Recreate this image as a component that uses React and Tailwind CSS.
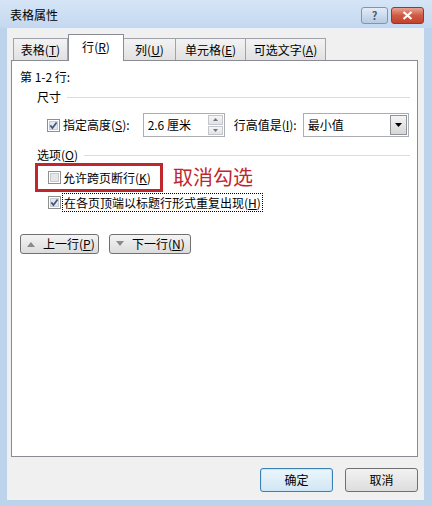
import React from "react";

function Check({ checked }) {
  return (
    <svg width="13" height="13" viewBox="0 0 13 13" className="shrink-0">
      <rect x="0.5" y="0.5" width="12" height="12" fill="#fff" stroke="#8e8f8f" />
      <rect x="2.5" y="2.5" width="8" height="8" fill="#e4e6ea" stroke="#c9cbcf" />
      {checked && (
        <path d="M3.3 6.4 L5.4 9 L9.6 3.4" fill="none" stroke="#3f5689" strokeWidth="1.7" />
      )}
    </svg>
  );
}

function Tab({ label, u, rest, w, active }) {
  if (active) {
    return (
      <div
        className={`${w} h-[27px] relative z-10 bg-white border border-b-0 border-[#898c95] flex items-start justify-center pt-[4px]`}
      >
        <span>
          {label}(<u>{u}</u>){rest}
        </span>
      </div>
    );
  }
  return (
    <div
      className={`${w} h-[22px] mb-[1px] bg-gradient-to-b from-[#f3f3f3] to-[#e1e1e1] border border-b-0 border-[#a0a3ab] flex items-center justify-center -ml-[1px]`}
    >
      <span>
        {label}(<u>{u}</u>){rest}
      </span>
    </div>
  );
}

function GrayButton({ up, label, u, w }) {
  return (
    <div
      className={`${w} h-[20px] rounded-[3px] border border-[#707070] bg-gradient-to-b from-[#f4f4f4] to-[#dcdcdc] flex items-center pl-[6px] gap-[8px]`}
    >
      <svg width="8" height="6" viewBox="0 0 8 6">
        {up ? <path d="M0 6 L4 1 L8 6 Z" fill="#8a8a8a" /> : <path d="M0 0 L8 0 L4 5 Z" fill="#8a8a8a" />}
      </svg>
      <span>
        {label}(<u>{u}</u>)
      </span>
    </div>
  );
}

export default function App() {
  return (
    <div className="w-[432px] h-[506px] bg-[#bcd3ec] flex flex-col text-[12px] leading-[16px] text-black font-['Noto_Sans_CJK_SC','Noto_Sans',sans-serif]">
      {/* title bar */}
      <div className="h-[28px] shrink-0 bg-gradient-to-b from-[#d6e5f6] to-[#c4d8ef] flex items-center justify-between pl-[10px] pr-[8px]">
        <span className="text-[12px] mt-[1px]">表格属性</span>
        <div className="flex gap-[3px] mt-[3px]">
          <div className="w-[27px] h-[17px] rounded-[3px] border border-[#7d96b8] bg-gradient-to-b from-[#e3ecf6] to-[#b7cbe2] flex items-center justify-center text-[11px] leading-none text-[#4b5d77] font-bold">
            ?
          </div>
          <div className="w-[33px] h-[17px] rounded-[3px] border border-[#8d3a32] bg-gradient-to-b from-[#e8a292] via-[#cf5a44] to-[#c2412c] flex items-center justify-center">
            <svg width="11" height="9" viewBox="0 0 11 9">
              <path d="M1.5 1 L9.5 8 M9.5 1 L1.5 8" stroke="#fff" strokeWidth="2.2" />
            </svg>
          </div>
        </div>
      </div>

      {/* client area */}
      <div className="ml-[7px] w-[417px] h-[472px] bg-[#f0f0f0] border-t border-l border-[#e9f0f8] flex flex-col">
        <div className="ml-[6px] mt-[5px] h-[27px] flex items-end -mb-[1px]">
          <Tab label="表格" u="T" w="w-[55px]" />
          <Tab label="行" u="R" w="w-[56px]" active />
          <Tab label="列" u="U" w="w-[53px]" />
          <Tab label="单元格" u="E" w="w-[71px]" />
          <Tab label="可选文字" u="A" w="w-[81px]" />
        </div>

        <div className="ml-[3px] w-[407px] h-[397px] bg-white border border-[#898c95] flex flex-col pl-[8px] pr-[7px]">
          <div className="mt-[8px]">第 1-2 行:</div>

          <div className="mt-[4px] ml-[17px] flex items-center gap-[6px]">
            <span>尺寸</span>
            <div className="flex-1 h-px bg-[#dcdcdc]" />
          </div>

          <div className="mt-[8px] ml-[27px] h-[24px] flex items-center">
            <Check checked />
            <span className="ml-[3px]">
              指定高度(<u>S</u>):
            </span>
            <div className="ml-[13px] w-[82px] h-[24px] border border-[#abadb3] bg-white flex items-center justify-between pl-[4px] pr-[1px]">
              <span>2.6 厘米</span>
              <div className="w-[15px] h-[20px] flex flex-col gap-[1px]">
                <div className="flex-1 border border-[#c3c6cc] bg-gradient-to-b from-[#f6f6f6] to-[#e2e2e2] flex items-center justify-center">
                  <svg width="5" height="3" viewBox="0 0 5 3">
                    <path d="M0 3 L2.5 0 L5 3 Z" fill="#6d7480" />
                  </svg>
                </div>
                <div className="flex-1 border border-[#c3c6cc] bg-gradient-to-b from-[#f6f6f6] to-[#e2e2e2] flex items-center justify-center">
                  <svg width="5" height="3" viewBox="0 0 5 3">
                    <path d="M0 0 L5 0 L2.5 3 Z" fill="#6d7480" />
                  </svg>
                </div>
              </div>
            </div>
            <span className="ml-[9px]">
              行高值是(<u>I</u>):
            </span>
            <div className="ml-[6px] w-[106px] h-[24px] border border-[#abadb3] bg-white flex items-center justify-between pl-[4px] pr-[1px]">
              <span>最小值</span>
              <div className="w-[17px] h-[20px] border border-[#8f949b] bg-gradient-to-b from-[#f5f5f5] to-[#d6d6d6] flex items-center justify-center">
                <svg width="7" height="4" viewBox="0 0 7 4">
                  <path d="M0 0 L7 0 L3.5 4 Z" fill="#000" />
                </svg>
              </div>
            </div>
          </div>

          <div className="mt-[10px] ml-[17px] flex items-center gap-[6px]">
            <span>
              选项(<u>O</u>)
            </span>
            <div className="flex-1 h-px bg-[#dcdcdc]" />
          </div>

          <div className="ml-[15px] flex items-center">
            <div className="w-[128px] h-[29px] border-[3px] border-[#c0272d] flex items-center pl-[10px]">
              <Check />
              <span className="ml-[2px]">
                允许跨页断行(<u>K</u>)
              </span>
            </div>
            <span className="ml-[10px] text-[20px] leading-[24px] text-[#c0272d] -mt-[2px]">取消勾选</span>
          </div>

          <div className="mt-[1px] ml-[28px] flex items-center">
            <Check checked />
            <span className="ml-[1px] h-[19px] px-[1px] flex items-center border border-dotted border-black">
              在各页顶端以标题行形式重复出现(<u>H</u>)
            </span>
          </div>

          <div className="mt-[22px] flex gap-[10px]">
            <GrayButton up label="上一行" u="P" w="w-[79px]" />
            <GrayButton label="下一行" u="N" w="w-[82px]" />
          </div>
        </div>

        <div className="mt-[11px] mr-[6px] flex justify-end gap-[12px]">
          <div className="w-[73px] h-[24px] rounded-[3px] border border-[#3c7fb1] bg-gradient-to-b from-[#eaf6fd] to-[#d3e6f3] flex items-center justify-center shadow-[inset_0_0_0_1px_#c8e6f7]">
            确定
          </div>
          <div className="w-[73px] h-[24px] rounded-[3px] border border-[#707070] bg-gradient-to-b from-[#f2f2f2] to-[#dddddd] flex items-center justify-center">
            取消
          </div>
        </div>
      </div>
    </div>
  );
}
